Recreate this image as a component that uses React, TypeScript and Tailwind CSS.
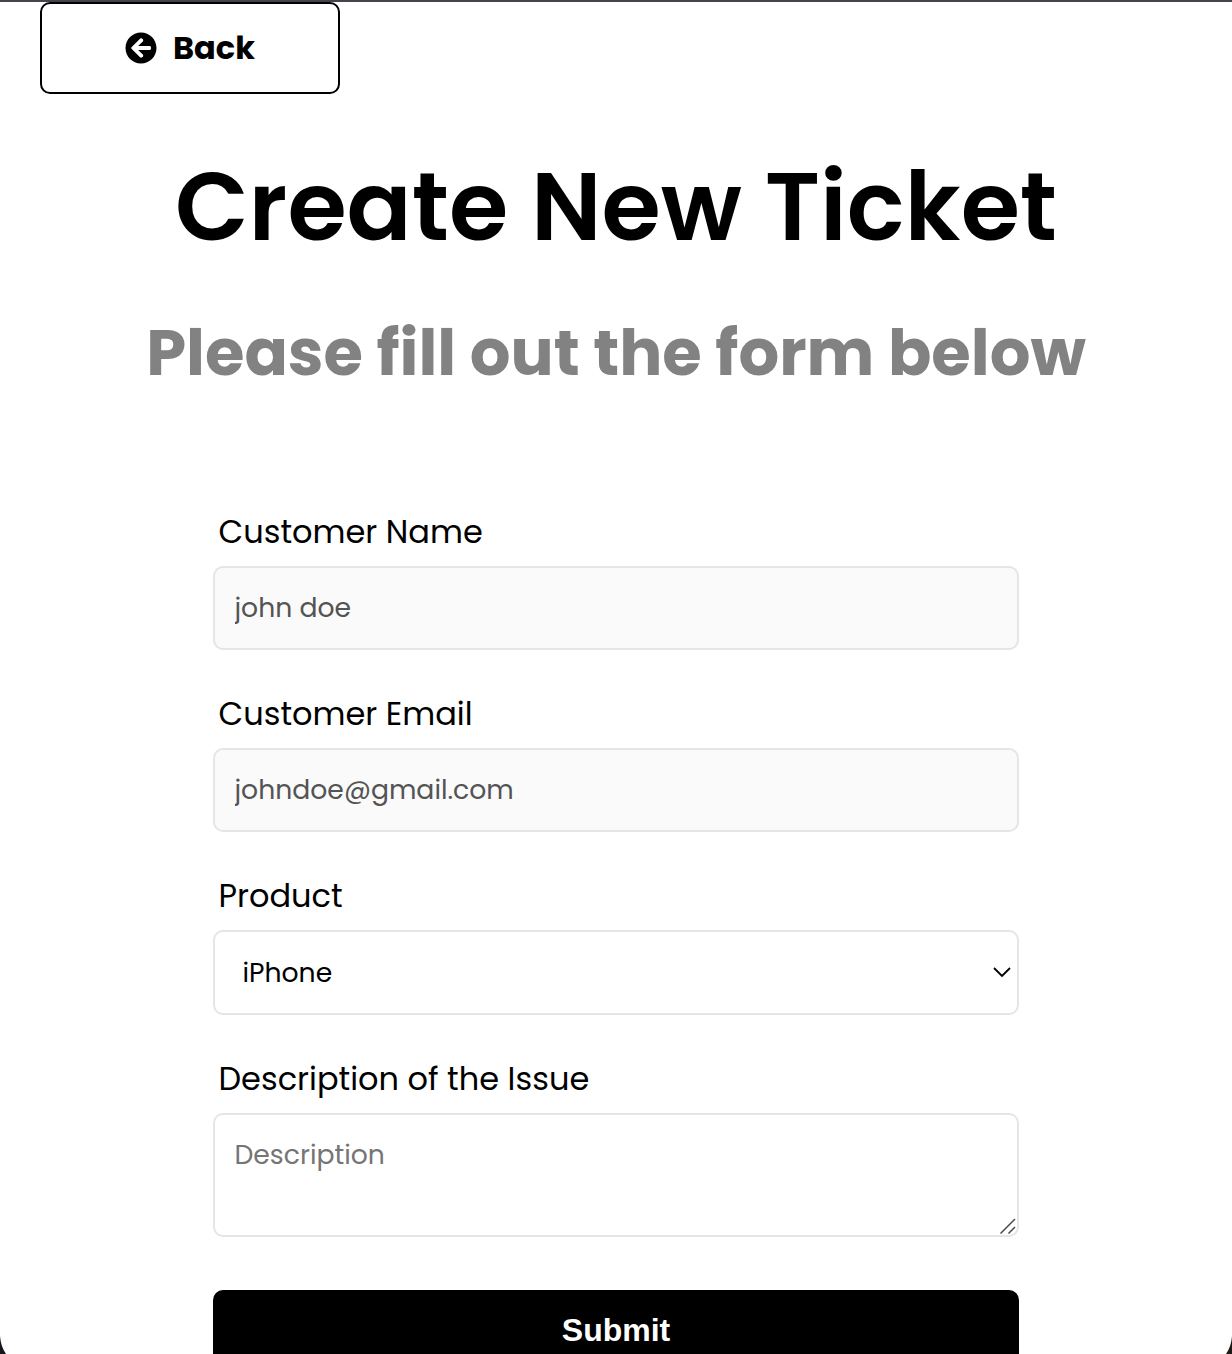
import type { ReactNode } from "react";
import { FaArrowCircleLeft } from "react-icons/fa";

const box =
  "block w-full rounded-[10px] border-2 border-[#e5e5e5] text-[26.667px] leading-[40px] outline-none";

function Field({
  id,
  label,
  className,
  children,
}: {
  id: string;
  label: string;
  className: string;
  children: ReactNode;
}) {
  return (
    <div className={`flex flex-col ${className}`}>
      <label
        htmlFor={id}
        className="mb-[10px] block h-12 pl-[5.5px] text-[32px] leading-[48px] whitespace-nowrap"
      >
        {label}
      </label>
      {children}
    </div>
  );
}

export default function App() {
  return (
    <div className="relative h-[1354px] w-full overflow-hidden border-t-2 border-[#47434c] bg-white font-['Poppins','Inter',sans-serif] text-black">
      <a
        href="#"
        className="ml-10 flex h-[92px] w-[300px] items-center justify-center rounded-[10px] border-2 border-black"
      >
        <FaArrowCircleLeft className="mr-4 size-8" />
        <span className="text-[32px] leading-[48px] font-bold">Back</span>
      </a>

      <h1 className="mt-[41px] h-[144px] text-center text-[96px] leading-[144px] font-semibold whitespace-nowrap">
        Create New Ticket
      </h1>

      <p className="mt-[26px] h-24 text-center text-[64px] leading-[96px] font-bold whitespace-nowrap text-[#828282]">
        Please fill out the form below
      </p>

      <form className="mx-auto mt-[107px] w-[806px]">
        <Field id="name" label="Customer Name" className="h-[142px]">
          <input
            id="name"
            disabled
            defaultValue="john doe"
            className={`${box} h-[84px] bg-[#fafafa] px-[19.5px] text-[#545454]`}
          />
        </Field>
        <Field id="email" label="Customer Email" className="mt-10 h-[142px]">
          <input
            id="email"
            disabled
            defaultValue="johndoe@gmail.com"
            className={`${box} h-[84px] bg-[#fafafa] px-[19.5px] text-[#545454]`}
          />
        </Field>
        <Field id="product" label="Product" className="mt-10 h-[143px]">
          <div className="relative">
            <select
              id="product"
              className={`${box} h-[85px] appearance-none bg-white pt-[1px] pr-10 pl-[27.5px]`}
            >
              <option>iPhone</option>
            </select>
            <svg
              className="pointer-events-none absolute top-[36px] right-[7px] h-[12px] w-[20px]"
              viewBox="0 0 20 12"
              fill="none"
              stroke="black"
              strokeWidth="1.8"
            >
              <path d="M2 2 L10 10 L18 2" />
            </svg>
          </div>
        </Field>
        <Field id="description" label="Description of the Issue" className="mt-10 h-[182px]">
          <div className="relative">
            <textarea
              id="description"
              placeholder="Description"
              className={`${box} h-[124px] resize-none bg-white px-[19.5px] pt-5 placeholder:text-[#757575]`}
            />
            <svg
              className="pointer-events-none absolute right-[3px] bottom-[3px] size-4"
              viewBox="0 0 16 16"
              fill="none"
              stroke="#4a4a4a"
              strokeWidth="1.5"
            >
              <path d="M0.5 15.5 L15 1 M8.5 15.5 L15 9" />
            </svg>
          </div>
        </Field>
        <button
          type="submit"
          className="mt-[53px] block h-[80px] w-full rounded-[10px] bg-black font-['Liberation_Sans',Arial,sans-serif] text-[32px] leading-[80px] font-bold text-white"
        >
          Submit
        </button>
      </form>

      <svg className="absolute bottom-0 left-0 h-[18px] w-[7px]" viewBox="0 0 7 18">
        <path d="M0 0 C0.5 7 2.5 13 6 18 H0 Z" fill="#17171b" />
      </svg>
      <svg className="absolute right-0 bottom-0 h-[18px] w-[7px]" viewBox="0 0 7 18">
        <path d="M7 0 C6.5 7 4.5 13 1 18 H7 Z" fill="#201a16" />
      </svg>
    </div>
  );
}
